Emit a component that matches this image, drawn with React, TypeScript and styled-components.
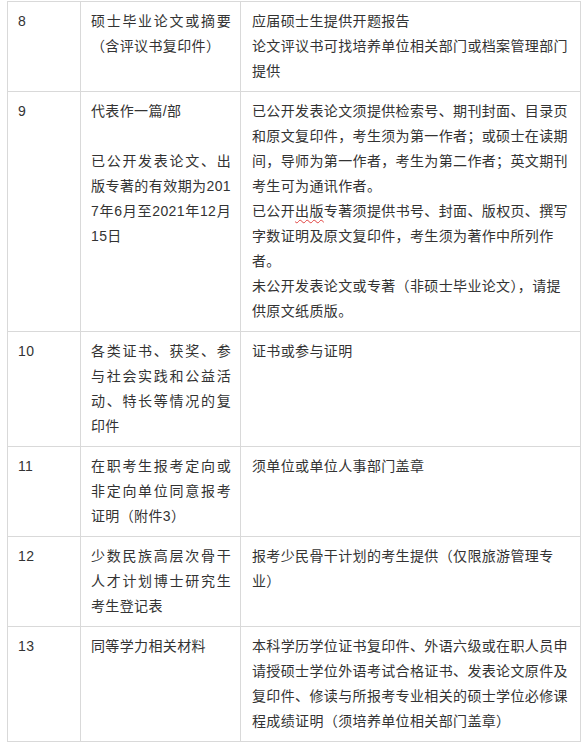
import React from "react";
import styled, { createGlobalStyle } from "styled-components";

const GlobalStyle = createGlobalStyle`
  body {
    margin: 0;
    background: #fff;
  }
`;

const Table = styled.table`
  margin: 1px 0 0 7px;
  width: 573px;
  table-layout: fixed;
  border-collapse: collapse;
  font-family: "Liberation Sans", "Noto Sans CJK SC", sans-serif;
  font-size: 14px;
  letter-spacing: 0.36px;
  line-height: 25px;
  color: #333;
`;

const Cell = styled.td<{ $justify?: boolean; $wide?: boolean }>`
  border: 1px solid #d9d9d9;
  vertical-align: top;
  padding: 7px 9px 7px ${(p) => (p.$wide ? "11px" : "10px")};
  text-align: ${(p) => (p.$justify ? "justify" : "left")};
  word-break: break-all;
`;

const Para = styled.p`
  margin: 0;
`;

const Blank = styled.div`
  height: 25px;
`;

const Typo = styled.span`
  text-decoration: underline wavy #e0413f;
  text-decoration-thickness: 1px;
  text-underline-offset: 3px;
`;

interface IRow {
  no: string;
  item: string[];
  note: React.ReactNode[];
}

const rows: IRow[] = [
  {
    no: "8",
    item: ["硕士毕业论文或摘要（含评议书复印件）"],
    note: ["应届硕士生提供开题报告", "论文评议书可找培养单位相关部门或档案管理部门提供"],
  },
  {
    no: "9",
    item: ["代表作一篇/部", "", "已公开发表论文、出版专著的有效期为2017年6月至2021年12月15日"],
    note: [
      "已公开发表论文须提供检索号、期刊封面、目录页和原文复印件，考生须为第一作者；或硕士在读期间，导师为第一作者，考生为第二作者；英文期刊考生可为通讯作者。",
      <>
        已公开<Typo>出版</Typo>专著须提供书号、封面、版权页、撰写字数证明及原文复印件，考生须为著作中所列作者。
      </>,
      "未公开发表论文或专著（非硕士毕业论文），请提供原文纸质版。",
    ],
  },
  {
    no: "10",
    item: ["各类证书、获奖、参与社会实践和公益活动、特长等情况的复印件"],
    note: ["证书或参与证明"],
  },
  {
    no: "11",
    item: ["在职考生报考定向或非定向单位同意报考证明（附件3）"],
    note: ["须单位或单位人事部门盖章"],
  },
  {
    no: "12",
    item: ["少数民族高层次骨干人才计划博士研究生考生登记表"],
    note: ["报考少民骨干计划的考生提供（仅限旅游管理专业）"],
  },
  {
    no: "13",
    item: ["同等学力相关材料"],
    note: [
      "本科学历学位证书复印件、外语六级或在职人员申请授硕士学位外语考试合格证书、发表论文原件及复印件、修读与所报考专业相关的硕士学位必修课程成绩证明（须培养单位相关部门盖章）",
    ],
  },
];

const App = () => {
  return (
    <>
      <GlobalStyle />
      <Table>
        <colgroup>
          <col style={{ width: 73 }} />
          <col style={{ width: 160 }} />
          <col style={{ width: 340 }} />
        </colgroup>
        <tbody>
          {rows.map((row) => (
            <tr key={row.no}>
              <Cell>{row.no}</Cell>
              <Cell $justify>
                {row.item.map((line, i) =>
                  line ? <Para key={i}>{line}</Para> : <Blank key={i} />
                )}
              </Cell>
              <Cell $wide>
                {row.note.map((line, i) => (
                  <Para key={i}>{line}</Para>
                ))}
              </Cell>
            </tr>
          ))}
        </tbody>
      </Table>
    </>
  );
};

export default App;
